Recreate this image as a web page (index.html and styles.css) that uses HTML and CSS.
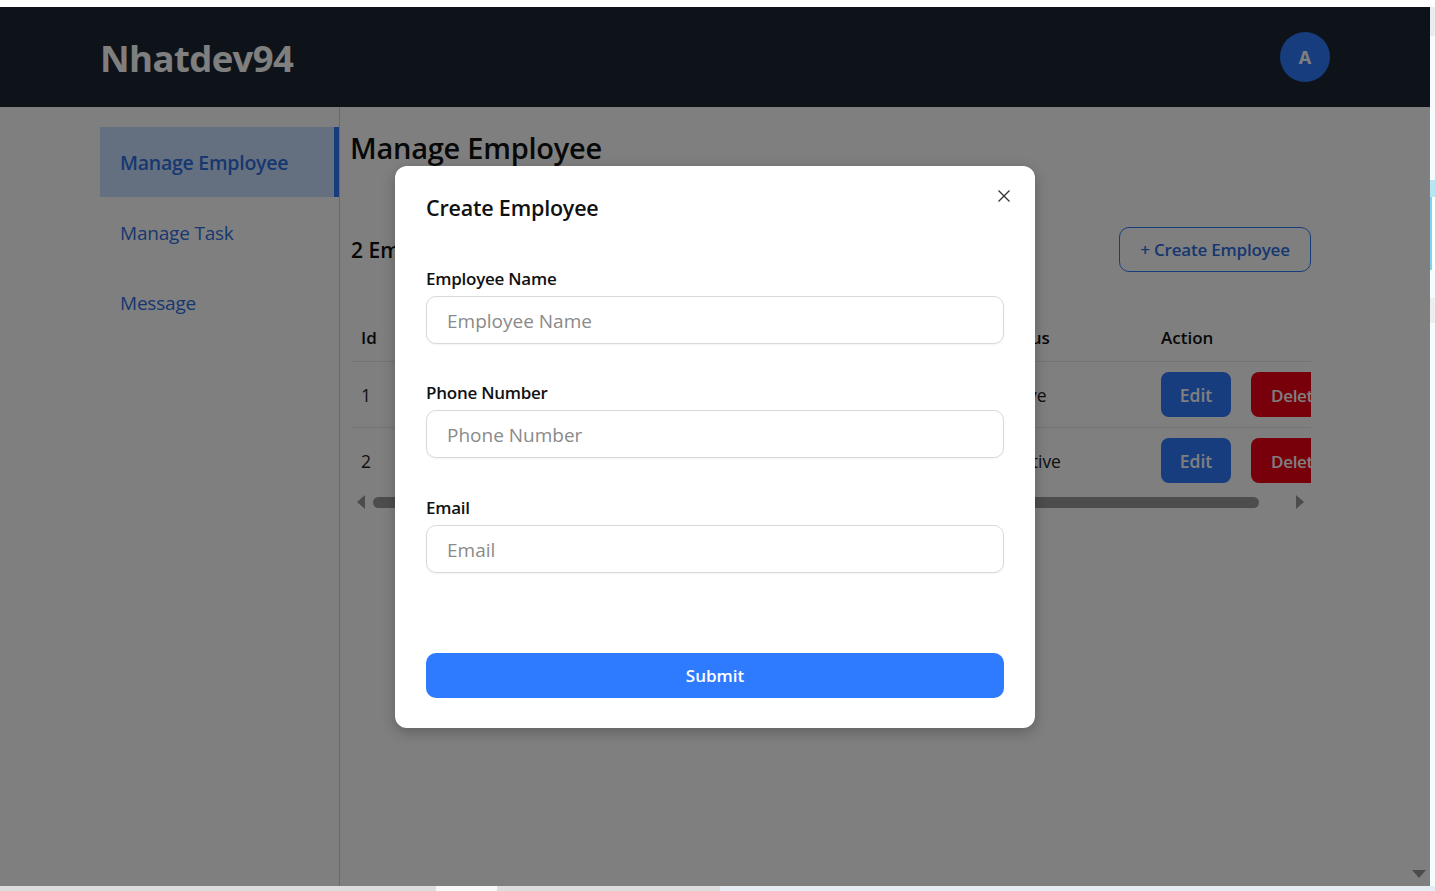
FILE: index.html
```html
<!DOCTYPE html>
<html lang="en">
<head>
    <meta charset="UTF-8">
    <meta name="viewport" content="width=device-width, initial-scale=1.0">
    <title>Manage Employee</title>
    <link rel="stylesheet" href="styles.css">
</head>
<body>
<div class="top-strip"></div>
<div class="window">
    <div class="app">
        <header class="header">
            <div class="logo">Nhatdev94</div>
            <div class="avatar">A</div>
        </header>
        <div class="layout">
            <nav class="sidebar">
                <a class="nav-item active">Manage Employee</a>
                <a class="nav-item">Manage Task</a>
                <a class="nav-item">Message</a>
            </nav>
            <main class="main">
                <h1>Manage Employee</h1>
                <div class="toolbar">
                    <div class="count">2 Employees</div>
                    <button class="btn-create">+ Create Employee</button>
                </div>
                <table>
                    <colgroup>
                        <col class="col-id">
                        <col>
                        <col class="col-status">
                        <col class="col-action">
                    </colgroup>
                    <thead>
                        <tr>
                            <th>Id</th>
                            <th></th>
                            <th>Status</th>
                            <th>Action</th>
                        </tr>
                    </thead>
                    <tbody>
                        <tr>
                            <td>1</td>
                            <td></td>
                            <td>Active</td>
                            <td>
                                <div class="actions">
                                    <button class="btn-edit">Edit</button>
                                    <button class="btn-delete">Delete</button>
                                </div>
                            </td>
                        </tr>
                        <tr>
                            <td>2</td>
                            <td></td>
                            <td>Inactive</td>
                            <td>
                                <div class="actions">
                                    <button class="btn-edit">Edit</button>
                                    <button class="btn-delete">Delete</button>
                                </div>
                            </td>
                        </tr>
                    </tbody>
                </table>
                <div class="table-scroll">
                    <span class="arrow-left"></span>
                    <span class="thumb"></span>
                    <span class="arrow-right"></span>
                </div>
            </main>
            <div class="page-scroll"><span class="arrow-down"></span></div>
        </div>

        <div class="overlay">
            <form class="modal">
                <button type="button" class="modal-close" aria-label="Close">
                    <svg width="14" height="14" viewBox="0 0 14 14"><path d="M1.5 1.5l11 11M12.5 1.5l-11 11" stroke="#333" stroke-width="1.3" fill="none"/></svg>
                </button>
                <h2>Create Employee</h2>
                <label class="field">
                    <span>Employee Name</span>
                    <input type="text" placeholder="Employee Name">
                </label>
                <label class="field">
                    <span>Phone Number</span>
                    <input type="text" placeholder="Phone Number">
                </label>
                <label class="field">
                    <span>Email</span>
                    <input type="text" placeholder="Email">
                </label>
                <button type="button" class="btn-submit">Submit</button>
            </form>
        </div>
    </div>
    <div class="side-strip">
        <div class="seg-grey"></div>
        <div class="seg-pale"></div>
        <div class="seg-tick"></div>
        <div class="seg-sky"></div>
        <div class="seg-pale2"></div>
        <div class="seg-grey2"></div>
    </div>
</div>
<div class="bottom-strip"><span class="tab"></span></div>
</body>
</html>
```

FILE: styles.css
```css
* {
    box-sizing: border-box;
}

html, body {
    height: 100%;
}

body {
    margin: 0;
    display: flex;
    flex-direction: column;
    overflow: hidden;
    font-family: "Open Sans", "Noto Sans", sans-serif;
    background-color: #fff;
    color: #111;
}

.top-strip {
    height: 7px;
    background-color: #fff;
}

.window {
    flex: 1;
    display: flex;
    min-height: 0;
}

.app {
    flex: 1;
    position: relative;
    display: flex;
    flex-direction: column;
    background-color: #fff;
}

.header {
    height: 100px;
    padding: 0 100px;
    display: flex;
    align-items: center;
    justify-content: space-between;
    background-color: #1d2735;
}

.logo {
    font-size: 36.5px;
    font-weight: 700;
    color: #fff;
    letter-spacing: -0.6px;
    margin-top: 2px;
}

.avatar {
    width: 50px;
    height: 50px;
    border-radius: 50%;
    display: flex;
    align-items: center;
    justify-content: center;
    background-color: #2f7bff;
    color: #fff;
    font-size: 18px;
    font-weight: 700;
    margin-top: -1px;
}

.layout {
    flex: 1;
    display: flex;
    min-height: 0;
}

.sidebar {
    width: 340px;
    padding: 20px 0 0 100px;
    border-right: 1px solid #d4d4d4;
}

.nav-item {
    display: flex;
    align-items: center;
    height: 70px;
    padding: 1px 0 0 20px;
    font-size: 19px;
    color: #2f6fe0;
    letter-spacing: -0.2px;
}

.nav-item.active {
    background-color: #c9dfff;
    border-right: 5px solid #2f7bff;
    font-size: 19.5px;
    font-weight: 600;
    letter-spacing: -0.25px;
}

.main {
    width: 971px;
    padding: 20px 0 0 11px;
}

h1 {
    margin: 0 0 0 -1px;
    height: 42px;
    line-height: 42px;
    font-size: 29px;
    font-weight: 600;
    color: #111;
    letter-spacing: -0.25px;
}

.toolbar {
    margin-top: 58px;
    width: 960px;
    height: 45px;
    display: flex;
    align-items: center;
    justify-content: space-between;
}

.count {
    font-size: 21px;
    font-weight: 600;
}

.btn-create {
    width: 192px;
    height: 45px;
    border: 1px solid #2f7bff;
    border-radius: 10px;
    background: none;
    color: #2f6fe0;
    font-family: inherit;
    font-size: 17px;
    font-weight: 600;
    letter-spacing: -0.2px;
}

table {
    margin-top: 42px;
    width: 960px;
    table-layout: fixed;
    border-collapse: collapse;
}

.col-id {
    width: 60px;
}

.col-status {
    width: 163px;
}

.col-action {
    width: 160px;
}

th, td {
    padding: 0 0 0 10px;
    text-align: left;
    font-size: 17.5px;
    border-bottom: 1px solid #e5e7eb;
}

tbody tr:last-child td {
    border-bottom: none;
}

th {
    height: 47px;
    font-weight: 600;
    font-size: 17px;
    color: #111;
}

td {
    height: 66px;
    padding-top: 2px;
    color: #222;
}

.actions {
    display: flex;
    gap: 20px;
    overflow: hidden;
    width: 150px;
    margin-top: -2px;
}

.actions button {
    flex-shrink: 0;
    height: 45px;
    padding-top: 2px;
    border: none;
    border-radius: 8px;
    color: #fff;
    font-family: inherit;
    font-size: 17.5px;
    font-weight: 600;
}

.btn-edit {
    width: 70px;
    background-color: #2f7bff;
}

.actions .btn-delete {
    width: 90px;
    padding: 2px 0 0 20px;
    text-align: left;
    font-size: 17px;
    letter-spacing: -0.3px;
    background-color: #f00014;
}

.table-scroll {
    width: 960px;
    height: 16px;
    margin-top: 1px;
    padding: 0 7px 0 6px;
    display: flex;
    align-items: center;
}

.thumb {
    width: 886px;
    height: 11px;
    margin: 0 auto 0 8px;
    border-radius: 6px;
    background-color: #9a9a9a;
}

.arrow-left, .arrow-right {
    width: 0;
    height: 0;
    border-top: 7px solid transparent;
    border-bottom: 7px solid transparent;
}

.arrow-left {
    border-right: 8px solid #999;
}

.arrow-right {
    border-left: 8px solid #999;
}

.page-scroll {
    flex: 1;
    display: flex;
    align-items: flex-end;
    justify-content: flex-end;
    padding: 0 4px 8px 0;
}

.arrow-down {
    width: 0;
    height: 0;
    border-left: 7px solid transparent;
    border-right: 7px solid transparent;
    border-top: 8px solid #999;
}

.overlay {
    position: absolute;
    inset: 0;
    display: flex;
    align-items: center;
    justify-content: center;
    background-color: rgba(0, 0, 0, 0.5);
}

.modal {
    position: relative;
    width: 640px;
    height: 562px;
    padding: 24px 31px 30px 31px;
    display: flex;
    flex-direction: column;
    border-radius: 12px;
    background-color: #fff;
    box-shadow: 0 4px 14px rgba(0, 0, 0, 0.25);
}

.modal-close {
    position: absolute;
    top: 23px;
    right: 24px;
    width: 14px;
    height: 14px;
    padding: 0;
    display: flex;
    border: none;
    background: none;
}

h2 {
    margin: 0 0 42px 0;
    height: 36px;
    line-height: 36px;
    font-size: 21.5px;
    font-weight: 600;
    color: #111;
    letter-spacing: -0.2px;
}

.field {
    display: flex;
    flex-direction: column;
    margin-bottom: 38.5px;
}

.field span {
    height: 28px;
    line-height: 21px;
    font-size: 17px;
    font-weight: 600;
    color: #111;
    letter-spacing: -0.25px;
}

.field input {
    height: 48px;
    padding: 2px 20px 0 20px;
    border: 1px solid #d9d9d9;
    border-radius: 10px;
    background-color: #fff;
    box-shadow: 0 1px 2px rgba(0, 0, 0, 0.05);
    font-family: inherit;
    font-size: 19px;
    outline: none;
}

.field input::placeholder {
    color: #8a8a8a;
}

.btn-submit {
    margin-top: auto;
    height: 45px;
    border: none;
    border-radius: 10px;
    background-color: #2f7bff;
    color: #fff;
    font-family: inherit;
    font-size: 17px;
    font-weight: 600;
}

.side-strip {
    width: 5px;
    display: flex;
    flex-direction: column;
    background-color: #f6fcfd;
}

.seg-grey {
    height: 29px;
    background-color: #e8eeee;
}

.seg-pale {
    height: 144px;
}

.seg-tick {
    height: 17px;
    background-color: #b5e6f2;
}

.seg-sky {
    height: 73px;
    background: linear-gradient(to right, #7fd3ea 2px, #fff 2px);
}

.seg-pale2 {
    height: 28px;
}

.seg-grey2 {
    height: 25px;
    background-color: #eceeee;
}

.bottom-strip {
    height: 5px;
    background: linear-gradient(to right, #dcdedd 0, #dcdedd 720px, #e3edf3 720px);
}

.tab {
    display: block;
    width: 61px;
    height: 5px;
    margin-left: 436px;
    background-color: #f8f8f8;
}
```
